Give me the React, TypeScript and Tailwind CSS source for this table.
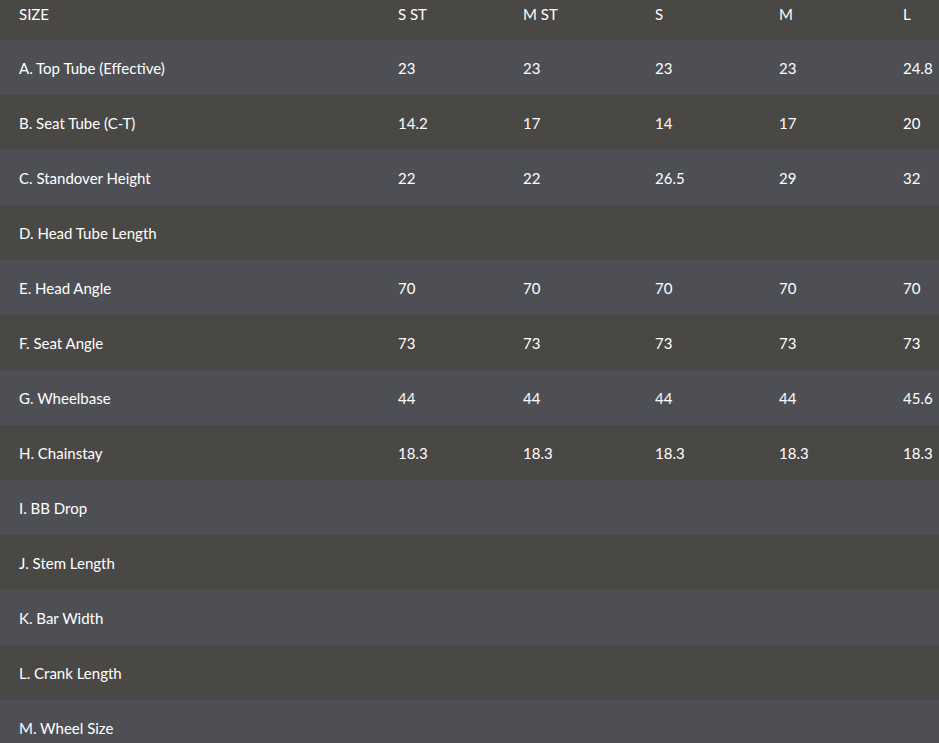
const columns = ['S ST', 'M ST', 'S', 'M', 'L']

const rows: [string, string[]][] = [
  ['A. Top Tube (Effective)', ['23', '23', '23', '23', '24.8']],
  ['B. Seat Tube (C-T)', ['14.2', '17', '14', '17', '20']],
  ['C. Standover Height', ['22', '22', '26.5', '29', '32']],
  ['D. Head Tube Length', ['', '', '', '', '']],
  ['E. Head Angle', ['70', '70', '70', '70', '70']],
  ['F. Seat Angle', ['73', '73', '73', '73', '73']],
  ['G. Wheelbase', ['44', '44', '44', '44', '45.6']],
  ['H. Chainstay', ['18.3', '18.3', '18.3', '18.3', '18.3']],
  ['I. BB Drop', ['', '', '', '', '']],
  ['J. Stem Length', ['', '', '', '', '']],
  ['K. Bar Width', ['', '', '', '', '']],
  ['L. Crank Length', ['', '', '', '', '']],
  ['M. Wheel Size', ['', '', '', '', '']],
]

const grid = 'grid grid-cols-[379px_125px_132px_124px_124px_1fr]'

export default function App() {
  return (
    <div className="h-[743px] w-[939px] overflow-hidden bg-[#4a4845] text-[15px] text-white [font-family:Lato,'Liberation_Sans',sans-serif]">
      {/* header */}
      <div className={`${grid} h-[40px] items-start bg-[#4a4845] pt-[3px]`}>
        <div className="pl-[19px]">SIZE</div>
        {columns.map((c) => (
          <div key={c} className="pl-[19px]">
            {c}
          </div>
        ))}
      </div>

      {rows.map(([label, vals], i) => (
        <div
          key={label}
          className={`${grid} h-[55px] items-center pt-[2px] ${i % 2 === 0 ? 'bg-[#4d4f55]' : 'bg-[#4a4845]'}`}
        >
          <div className="pl-[19px]">{label}</div>
          {vals.map((v, j) => (
            <div key={j} className="pl-[19px]">
              {v}
            </div>
          ))}
        </div>
      ))}
    </div>
  )
}
